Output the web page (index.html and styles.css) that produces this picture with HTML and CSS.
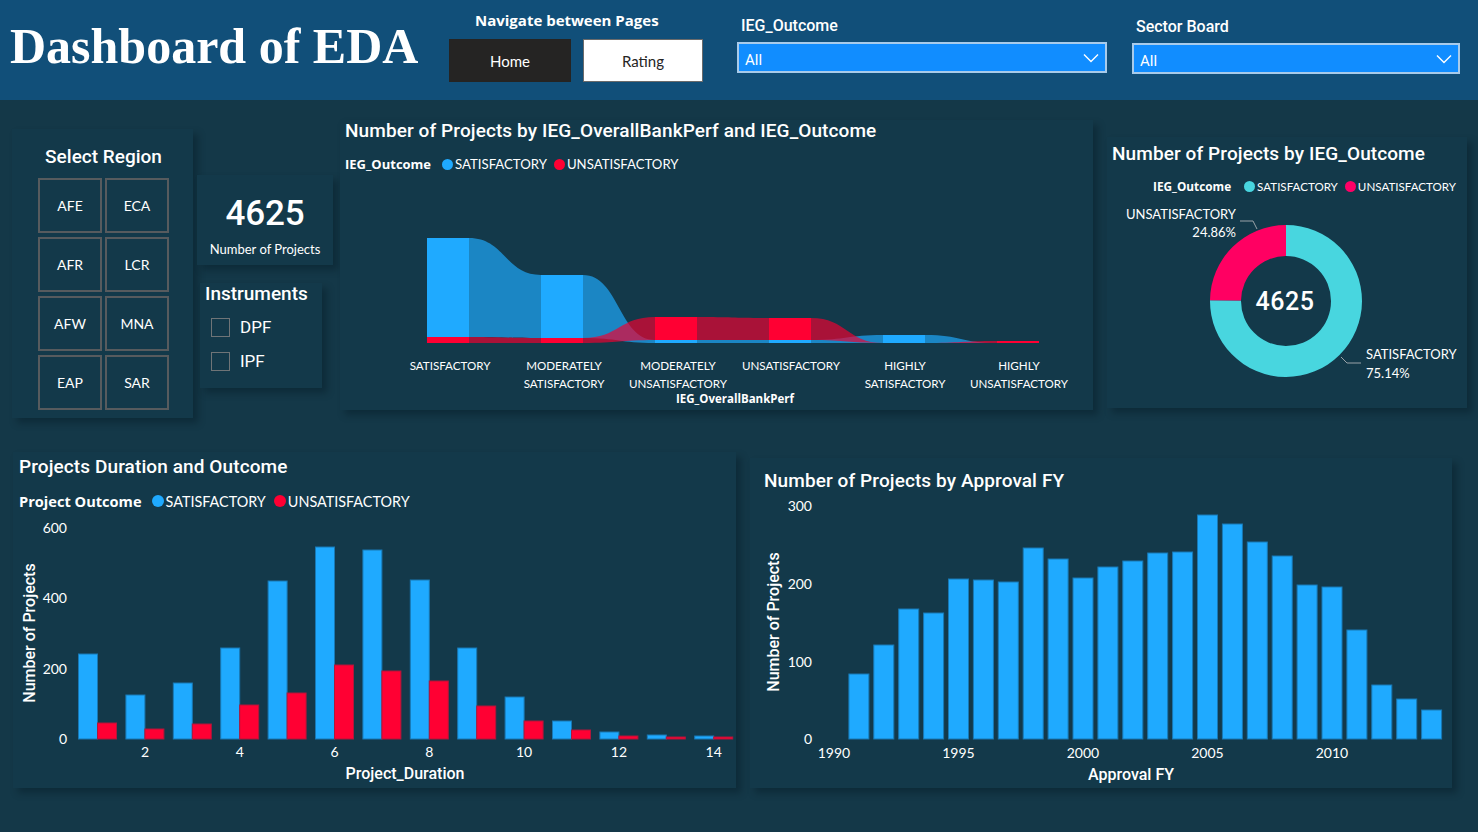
FILE: index.html
```html
<!DOCTYPE html>
<html lang="en">
<head>
<meta charset="utf-8">
<title>Dashboard of EDA</title>
<link rel="stylesheet" href="styles.css">
</head>
<body>
<header class="topbar">
  <h1 class="title">Dashboard of EDA</h1>
  <div class="nav">
    <div class="nav-label">Navigate between Pages</div>
    <div class="nav-buttons">
      <button class="btn btn-home">Home</button>
      <button class="btn btn-rating">Rating</button>
    </div>
  </div>
  <div class="slicer slicer-outcome">
    <div class="slicer-label">IEG_Outcome</div>
    <div class="dropdown"><span>All</span>
      <svg class="chev" width="16" height="10" viewBox="0 0 16 10"><path d="M1 1.5 L8 8.5 L15 1.5" fill="none" stroke="#fff" stroke-width="1.4"/></svg>
    </div>
  </div>
  <div class="slicer slicer-sector">
    <div class="slicer-label">Sector Board</div>
    <div class="dropdown"><span>All</span>
      <svg class="chev" width="16" height="10" viewBox="0 0 16 10"><path d="M1 1.5 L8 8.5 L15 1.5" fill="none" stroke="#fff" stroke-width="1.4"/></svg>
    </div>
  </div>
</header>

<main class="content">
  <section class="row row-top">
    <div class="card region-card">
      <div class="region-title">Select Region</div>
      <div class="region-grid">
        <div class="region-btn">AFE</div><div class="region-btn">ECA</div>
        <div class="region-btn">AFR</div><div class="region-btn">LCR</div>
        <div class="region-btn">AFW</div><div class="region-btn">MNA</div>
        <div class="region-btn">EAP</div><div class="region-btn">SAR</div>
      </div>
    </div>

    <div class="mid-col">
      <div class="card kpi-card">
        <div class="kpi-value">4625</div>
        <div class="kpi-label">Number of Projects</div>
      </div>
      <div class="card instr-card">
        <div class="instr-title">Instruments</div>
        <div class="instr-item"><span class="checkbox"></span><span>DPF</span></div>
        <div class="instr-item"><span class="checkbox"></span><span>IPF</span></div>
      </div>
    </div>

    <div class="card ribbon-card">
      <div class="chart-title">Number of Projects by IEG_OverallBankPerf and IEG_Outcome</div>
      <div class="legend legend-ribbon">
        <span class="legend-name">IEG_Outcome</span>
        <span class="legend-item"><i class="dot dot-blue"></i>SATISFACTORY</span>
        <span class="legend-item"><i class="dot dot-red"></i>UNSATISFACTORY</span>
      </div>
      <svg class="chart ribbon-svg" width="753" height="237" viewBox="340 173 753 237">
        <g class="rib-blue">
          <path d="M469,238 C505,238 505,275 541,275 L541,338 C505,338 505,337 469,337 Z"/>
          <path d="M583,275 C619,275 619,340 655,340 L655,343 C619,343 619,338 583,338 Z"/>
          <path d="M697,340 L769,340 L769,343 L697,343 Z"/>
          <path d="M811,340 C847,340 847,335 883,335 L883,343 L811,343 Z"/>
          <path d="M925,335 C961,335 961,343 997,343 L925,343 Z"/>
        </g>
        <g class="rib-red">
          <path d="M469,337 C505,337 505,338 541,338 L541,343 L469,343 Z"/>
          <path d="M583,338 C619,338 619,317 655,317 L655,340 C619,340 619,343 583,343 Z"/>
          <path d="M697,317 C733,317 733,318 769,318 L769,340 L697,340 Z"/>
          <path d="M811,318 C847,318 847,343 883,343 C847,343 847,340 811,340 Z"/>
          <path d="M925,343 C961,343 961,341 997,341 L997,343 Z"/>
        </g>
        <g class="bar-blue">
          <rect x="427" y="238" width="42" height="99"/>
          <rect x="541" y="275" width="42" height="63"/>
          <rect x="655" y="340" width="42" height="3"/>
          <rect x="769" y="340" width="42" height="3"/>
          <rect x="883" y="335" width="42" height="8"/>
        </g>
        <g class="bar-red">
          <rect x="427" y="337" width="42" height="6"/>
          <rect x="541" y="338" width="42" height="5"/>
          <rect x="655" y="317" width="42" height="23"/>
          <rect x="769" y="318" width="42" height="22"/>
          <rect x="997" y="341" width="42" height="2"/>
        </g>
        <g class="axis-cat">
          <text x="450" y="369.5">SATISFACTORY</text>
          <text x="564" y="369.5">MODERATELY</text>
          <text x="564" y="387.5">SATISFACTORY</text>
          <text x="678" y="369.5">MODERATELY</text>
          <text x="678" y="387.5">UNSATISFACTORY</text>
          <text x="791" y="369.5">UNSATISFACTORY</text>
          <text x="905" y="369.5">HIGHLY</text>
          <text x="905" y="387.5">SATISFACTORY</text>
          <text x="1019" y="369.5">HIGHLY</text>
          <text x="1019" y="387.5">UNSATISFACTORY</text>
        </g>
        <text class="axis-cat-title" x="735" y="402.5">IEG_OverallBankPerf</text>
      </svg>
    </div>

    <div class="card donut-card">
      <div class="chart-title">Number of Projects by IEG_Outcome</div>
      <div class="legend legend-donut">
        <span class="legend-name">IEG_Outcome</span>
        <span class="legend-item"><i class="dot dot-teal"></i>SATISFACTORY</span>
        <span class="legend-item"><i class="dot dot-pink"></i>UNSATISFACTORY</span>
      </div>
      <svg class="chart donut-svg" width="360" height="214" viewBox="1107 194 360 214">
        <path class="seg-teal" d="M1286,225 A76,76 0 1 1 1210,300.3 L1241,300.6 A45,45 0 1 0 1286,256 Z"/>
        <path class="seg-pink" d="M1286,225 A76,76 0 0 0 1210,300.3 L1241,300.6 A45,45 0 0 1 1286,256 Z"/>
        <text class="donut-center" x="1285" y="310">4625</text>
        <polyline class="leader" points="1240,221 1253,221 1257,229"/>
        <polyline class="leader" points="1341,357 1347,363 1361,363"/>
        <text class="donut-lbl end" x="1236" y="219">UNSATISFACTORY</text>
        <text class="donut-lbl end" x="1236" y="237">24.86%</text>
        <text class="donut-lbl" x="1366" y="359">SATISFACTORY</text>
        <text class="donut-lbl" x="1366" y="378">75.14%</text>
      </svg>
    </div>
  </section>

  <section class="row row-bottom">
    <div class="card duration-card">
      <div class="chart-title">Projects Duration and Outcome</div>
      <div class="legend legend-duration">
        <span class="legend-name">Project Outcome</span>
        <span class="legend-item"><i class="dot dot-blue"></i>SATISFACTORY</span>
        <span class="legend-item"><i class="dot dot-red"></i>UNSATISFACTORY</span>
      </div>
      <svg class="chart" width="723" height="277" viewBox="13 511 723 277">
        <g class="axis-num end">
          <text x="67" y="532.5">600</text>
          <text x="67" y="602.5">400</text>
          <text x="67" y="673.5">200</text>
          <text x="67" y="743.5">0</text>
        </g>
        <text class="axis-title" transform="translate(35,633) rotate(-90)">Number of Projects</text>
        <g class="col-blue">
          <rect x="78.5" y="654" width="19" height="85"/>
          <rect x="125.9" y="695" width="19" height="44"/>
          <rect x="173.3" y="683" width="19" height="56"/>
          <rect x="220.7" y="648" width="19" height="91"/>
          <rect x="268.1" y="581" width="19" height="158"/>
          <rect x="315.5" y="547" width="19" height="192"/>
          <rect x="362.9" y="550" width="19" height="189"/>
          <rect x="410.3" y="580" width="19" height="159"/>
          <rect x="457.7" y="648" width="19" height="91"/>
          <rect x="505.1" y="697" width="19" height="42"/>
          <rect x="552.5" y="721" width="19" height="18"/>
          <rect x="599.9" y="732" width="19" height="7"/>
          <rect x="647.3" y="735" width="19" height="4"/>
          <rect x="694.7" y="736" width="19" height="3"/>
        </g>
        <g class="col-red">
          <rect x="97.5" y="723" width="19" height="16"/>
          <rect x="144.9" y="729" width="19" height="10"/>
          <rect x="192.3" y="724" width="19" height="15"/>
          <rect x="239.7" y="705" width="19" height="34"/>
          <rect x="287.1" y="693" width="19" height="46"/>
          <rect x="334.5" y="665" width="19" height="74"/>
          <rect x="381.9" y="671" width="19" height="68"/>
          <rect x="429.3" y="681" width="19" height="58"/>
          <rect x="476.7" y="706" width="19" height="33"/>
          <rect x="524.1" y="721" width="19" height="18"/>
          <rect x="571.5" y="730" width="19" height="9"/>
          <rect x="618.9" y="736" width="19" height="3"/>
          <rect x="666.3" y="737" width="19" height="2"/>
          <rect x="713.7" y="737" width="19" height="2"/>
        </g>
        <g class="axis-num mid">
          <text x="145" y="757">2</text>
          <text x="239.7" y="757">4</text>
          <text x="334.5" y="757">6</text>
          <text x="429.3" y="757">8</text>
          <text x="524.1" y="757">10</text>
          <text x="618.9" y="757">12</text>
          <text x="713.7" y="757">14</text>
        </g>
        <text class="axis-title" x="405" y="779">Project_Duration</text>
      </svg>
    </div>

    <div class="card fy-card">
      <div class="chart-title">Number of Projects by Approval FY</div>
      <svg class="chart" width="702" height="296" viewBox="750 492 702 296">
        <g class="axis-num end">
          <text x="812" y="510.5">300</text>
          <text x="812" y="588.5">200</text>
          <text x="812" y="666.5">100</text>
          <text x="812" y="743.5">0</text>
        </g>
        <text class="axis-title" transform="translate(779,622) rotate(-90)">Number of Projects</text>
        <g class="col-blue">
          <rect x="848.9" y="674" width="20" height="65"/>
          <rect x="873.8" y="645" width="20" height="94"/>
          <rect x="898.7" y="609" width="20" height="130"/>
          <rect x="923.6" y="613" width="20" height="126"/>
          <rect x="948.5" y="579" width="20" height="160"/>
          <rect x="973.4" y="580" width="20" height="159"/>
          <rect x="998.3" y="582" width="20" height="157"/>
          <rect x="1023.2" y="548" width="20" height="191"/>
          <rect x="1048.1" y="559" width="20" height="180"/>
          <rect x="1073" y="578" width="20" height="161"/>
          <rect x="1097.9" y="567" width="20" height="172"/>
          <rect x="1122.8" y="561" width="20" height="178"/>
          <rect x="1147.7" y="553" width="20" height="186"/>
          <rect x="1172.6" y="552" width="20" height="187"/>
          <rect x="1197.5" y="515" width="20" height="224"/>
          <rect x="1222.4" y="524" width="20" height="215"/>
          <rect x="1247.3" y="542" width="20" height="197"/>
          <rect x="1272.2" y="556" width="20" height="183"/>
          <rect x="1297.1" y="585" width="20" height="154"/>
          <rect x="1322" y="587" width="20" height="152"/>
          <rect x="1346.9" y="630" width="20" height="109"/>
          <rect x="1371.8" y="685" width="20" height="54"/>
          <rect x="1396.7" y="699" width="20" height="40"/>
          <rect x="1421.6" y="710" width="20" height="29"/>
        </g>
        <g class="axis-num mid">
          <text x="834" y="758">1990</text>
          <text x="958.5" y="758">1995</text>
          <text x="1083" y="758">2000</text>
          <text x="1207.5" y="758">2005</text>
          <text x="1332" y="758">2010</text>
        </g>
        <text class="axis-title" x="1131" y="780">Approval FY</text>
      </svg>
    </div>
  </section>
</main>
</body>
</html>
```

FILE: styles.css
```css
* { box-sizing: border-box; }

html, body {
  margin: 0;
  padding: 0;
}

body {
  width: 1478px;
  height: 832px;
  overflow: hidden;
  background: #143848;
  color: #ffffff;
  font-family: "Lato", "Liberation Sans", sans-serif;
}

/* ---------- header ---------- */
.topbar {
  display: flex;
  align-items: flex-start;
  height: 100px;
  background: #114f79;
}

.title {
  margin: 21px 0 0 10px;
  width: 439px;
  font-family: "Liberation Serif", serif;
  font-weight: bold;
  font-size: 50px;
  line-height: 50px;
  color: #ffffff;
  white-space: nowrap;
}

.nav {
  width: 254px;
  padding-top: 10px;
}

.nav-label {
  font-family: "Open Sans", "Lato", sans-serif;
  font-weight: 700;
  font-size: 15px;
  line-height: 20px;
  padding-left: 26px;
  white-space: nowrap;
}

.nav-buttons {
  display: flex;
  gap: 12px;
  margin-top: 9px;
}

.btn {
  height: 43px;
  font-family: "Lato", sans-serif;
  font-size: 15px;
  padding: 0;
  cursor: pointer;
}

.btn-home {
  width: 122px;
  background: #252423;
  color: #ffffff;
  border: none;
}

.btn-rating {
  width: 120px;
  background: #ffffff;
  color: #252423;
  border: 1.5px solid #6b6b6b;
}

.slicer {
  margin-left: 34px;
  width: 370px;
  padding-top: 16px;
}

.slicer-sector {
  margin-left: 25px;
  width: 328px;
  padding-top: 17px;
}

.slicer-label {
  font-family: "Roboto", sans-serif;
  font-weight: 500;
  font-size: 16px;
  line-height: 20px;
  padding-left: 4px;
  margin-bottom: 6px;
}

.dropdown {
  display: flex;
  align-items: center;
  justify-content: space-between;
  height: 31px;
  padding: 4px 6px 0 6px;
  background: #118dff;
  border: 2px solid #a8cbeb;
  font-family: "Roboto", sans-serif;
  font-size: 15px;
}

.chev { margin-top: -3px; }

/* ---------- rows ---------- */
.content {
  display: flex;
  flex-direction: column;
}

.row {
  display: flex;
  align-items: flex-start;
}

.row-top {
  height: 330px;
  padding-left: 12px;
}

.row-bottom {
  height: 402px;
  padding-left: 13px;
}

.card {
  background: #13394a;
  box-shadow: 5px 5px 7px rgba(4, 20, 28, 0.35);
}

/* region slicer */
.region-card {
  margin-top: 29px;
  width: 181px;
  height: 289px;
  padding: 16px 0 0 26px;
}

.region-title {
  font-family: "Roboto", sans-serif;
  font-weight: 500;
  font-size: 19px;
  line-height: 24px;
  width: 131px;
  text-align: center;
}

.region-grid {
  display: grid;
  grid-template-columns: 64px 64px;
  grid-auto-rows: 55px;
  column-gap: 3px;
  row-gap: 4px;
  margin-top: 9px;
}

.region-btn {
  display: flex;
  align-items: center;
  justify-content: center;
  border: 2px solid #575b5e;
  font-family: "Lato", sans-serif;
  font-size: 14px;
}

/* middle column */
.mid-col {
  margin-left: 4px;
  margin-top: 75px;
  display: flex;
  flex-direction: column;
}

.kpi-card {
  width: 136px;
  height: 90px;
  padding-top: 19px;
  text-align: center;
}

.kpi-value {
  font-family: "Roboto", sans-serif;
  font-weight: 500;
  font-size: 35px;
  line-height: 40px;
  letter-spacing: -0.2px;
}

.kpi-label {
  margin-top: 7px;
  font-size: 13px;
  line-height: 16px;
}

.instr-card {
  margin-top: 18px;
  margin-left: 3px;
  width: 122px;
  height: 105px;
  padding-left: 5px;
}

.instr-title {
  font-family: "Roboto", sans-serif;
  font-weight: 500;
  font-size: 19px;
  line-height: 22px;
}

.instr-item {
  display: flex;
  align-items: center;
  gap: 10px;
  height: 34px;
  padding-left: 6px;
  font-family: "Roboto", sans-serif;
  font-size: 17px;
}

.instr-title + .instr-item { margin-top: 5px; }

.checkbox {
  width: 19px;
  height: 19px;
  border: 1.5px solid #6f7477;
}

/* chart cards */
.chart-title {
  font-family: "Roboto", sans-serif;
  font-weight: 500;
  font-size: 19px;
  line-height: 22px;
  letter-spacing: 0.1px;
  white-space: nowrap;
}

.chart { display: block; overflow: visible; }

.legend {
  display: flex;
  align-items: center;
  white-space: nowrap;
}

.legend-name {
  font-family: "Open Sans", "Lato", sans-serif;
  font-weight: 700;
}

.legend-item {
  display: inline-flex;
  align-items: center;
  gap: 2px;
}

.dot {
  display: inline-block;
  border-radius: 50%;
}

.dot-blue { background: #1faaff; }
.dot-red { background: #ff0033; }
.dot-teal { background: #48d5df; }
.dot-pink { background: #ff0066; }

.ribbon-card {
  margin-left: 7px;
  margin-top: 20px;
  width: 753px;
  height: 290px;
  padding-left: 5px;
}

.legend-ribbon {
  margin-top: 13px;
  height: 18px;
  font-size: 13px;
  gap: 7px;
}

.legend-ribbon .legend-name { margin-right: 4px; font-size: 13px; }
.legend-ribbon .legend-item { font-size: 13.2px; }
.legend-ribbon .dot { width: 11px; height: 11px; }

.ribbon-svg { margin-left: -5px; }

.rib-blue path { fill: rgba(31, 171, 255, 0.68); }
.rib-red path { fill: rgba(240, 0, 48, 0.68); }
.bar-blue rect { fill: #1faaff; }
.bar-red rect { fill: #ff0033; }

.axis-cat text {
  font-family: "Lato", sans-serif;
  font-size: 11.6px;
  fill: #ffffff;
  text-anchor: middle;
}

.axis-cat-title {
  font-family: "Open Sans", "Lato", sans-serif;
  font-weight: 700;
  font-size: 11.5px;
  fill: #ffffff;
  text-anchor: middle;
}

/* donut */
.donut-card {
  margin-left: 14px;
  margin-top: 37px;
  width: 360px;
  height: 271px;
  padding-top: 6px;
}

.donut-card .chart-title { padding-left: 5px; }

.legend-donut {
  margin-top: 13px;
  height: 16px;
  justify-content: flex-end;
  padding-right: 11px;
  font-size: 11.6px;
  gap: 7px;
}

.legend-donut .legend-name { margin-right: 6px; font-size: 11.8px; }
.legend-donut .dot { width: 11px; height: 11px; }

.seg-teal { fill: #48d6df; }
.seg-pink { fill: #ff0062; }

.donut-center {
  font-family: "Roboto", sans-serif;
  font-weight: 500;
  font-size: 25px;
  fill: #ffffff;
  text-anchor: middle;
  letter-spacing: 0.5px;
}

.leader {
  fill: none;
  stroke: #9aa3a8;
  stroke-width: 1;
}

.donut-lbl {
  font-family: "Lato", sans-serif;
  font-size: 13px;
  fill: #ffffff;
}

.donut-lbl.end { text-anchor: end; }

/* bottom row */
.duration-card {
  margin-top: 22px;
  width: 723px;
  height: 336px;
  padding: 4px 0 0 6px;
}

.legend-duration {
  margin-top: 13px;
  height: 20px;
  font-size: 14.4px;
  gap: 8px;
}

.legend-duration .legend-name { margin-right: 2px; font-size: 14.6px; }
.legend-duration .dot { width: 12px; height: 12px; }
.duration-card .chart { margin-left: -6px; }

.fy-card {
  margin-left: 14px;
  margin-top: 28px;
  width: 702px;
  height: 330px;
  padding: 12px 0 0 14px;
}

.fy-card .chart { margin-left: -14px; }

.col-blue rect {
  fill: #1faaff;
  stroke: #1878b4;
  stroke-width: 1;
}

.col-red rect {
  fill: #ff0033;
  stroke: #b0173a;
  stroke-width: 1;
}

.axis-num text {
  font-family: "Lato", sans-serif;
  font-size: 14px;
  fill: #ffffff;
}

.axis-num.end text { text-anchor: end; }
.axis-num.mid text { text-anchor: middle; }

.axis-title {
  font-family: "Roboto", sans-serif;
  font-weight: 500;
  font-size: 16px;
  fill: #ffffff;
  text-anchor: middle;
}
```
